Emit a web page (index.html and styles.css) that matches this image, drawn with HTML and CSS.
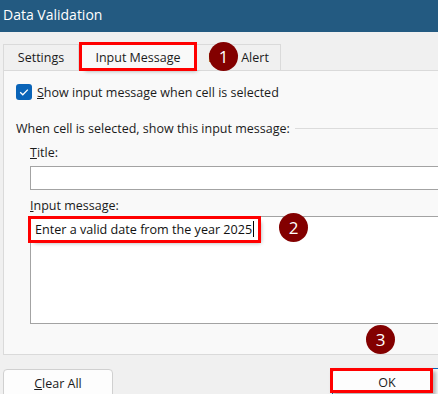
FILE: index.html
```html
<!DOCTYPE html>
<html lang="en">

<head>
    <meta charset="UTF-8">
    <meta name="viewport" content="width=device-width, initial-scale=1.0">
    <title>Data Validation</title>

    <link rel="stylesheet" href="styles.css">
</head>

<body>
    <div class="window">
        <div class="titlebar">Data Validation</div>

        <div class="tabs">
            <div class="tab tabSettings">Settings</div>
            <div class="tab tabAtivo">Input Message</div>
            <div class="tab tabAlert">Error Alert</div>
        </div>

        <div class="panel">
            <label class="checkRow">
                <span class="checkbox">
                    <svg width="16" height="16" viewBox="0 0 16 16">
                        <path d="M4.2 8.3 L6.8 10.8 L11.8 5.6" fill="none" stroke="white" stroke-width="1.3" />
                    </svg>
                </span>
                <span><u>S</u>how input message when cell is selected</span>
            </label>

            <div class="groupTitle"><span>When cell is selected, show this input message:</span></div>

            <div class="fieldLabel"><u>T</u>itle:</div>
            <div class="textBox"></div>

            <div class="fieldLabel"><u>I</u>nput message:</div>
            <div class="textArea">
                <span class="message">Enter a valid date from the year 2025<span class="caret"></span></span>
            </div>
        </div>

        <div class="buttons">
            <div class="btn"><u>C</u>lear All</div>
            <div class="btn btnOk">OK</div>
        </div>

        <div class="okMark"></div>

        <span class="badge badge1">1</span>
        <span class="badge badge2">2</span>
        <span class="badge badge3">3</span>
    </div>
</body>

</html>
```

FILE: styles.css
```css
* {
    margin: 0;
    padding: 0;
    box-sizing: border-box;
}

html,
body {
    overflow: hidden;
    background-color: #f0f0f0;
}

.window {
    position: relative;
    width: 438px;
    height: 394px;
    overflow: hidden;
    font-family: "Open Sans", "Noto Sans", Arial, sans-serif;
    font-size: 12.5px;
    color: #1b1b1b;
    background-color: #f0f0f0;
}

.titlebar {
    height: 32px;
    line-height: 29px;
    padding-left: 3px;
    background-color: #235a81;
    color: white;
    font-size: 14px;
}

/* abas */
.tabs {
    display: flex;
    align-items: flex-end;
    height: 26px;
    margin-top: 12px;
    padding-left: 3px;
}

.tab {
    height: 26px;
    line-height: 26px;
    border: 1px solid #dadada;
    border-bottom: none;
    text-align: center;
    background-color: #f0f0f0;
}

.tabSettings {
    width: 76px;
}

.tabAtivo {
    width: 112px;
    height: 23px;
    line-height: 25px;
    margin: 0 3px 2px 3px;
    border: none;
    background-color: #f9f9f9;
    outline: 3px solid #ff0000;
    box-shadow: 3px 3px 4px rgba(0, 0, 0, 0.35);
}

.tabAlert {
    width: 84px;
    border-left: none;
}

/* painel */
.panel {
    width: 470px;
    margin-left: 3px;
    padding: 13px 0 30px 12px;
    background-color: #f9f9f9;
    border: 1px solid #dadada;
}

.checkRow {
    display: flex;
    align-items: center;
    gap: 5px;
    height: 16px;
}

.checkbox {
    width: 16px;
    height: 16px;
    border-radius: 3px;
    background-color: #0a64b8;
}

.checkbox svg {
    display: block;
}

.groupTitle {
    display: flex;
    align-items: center;
    height: 18px;
    margin-top: 19px;
}

.groupTitle::after {
    content: "";
    flex: 1;
    margin-left: 5px;
    border-top: 1px solid #dcdcdc;
}

.fieldLabel {
    height: 18px;
    line-height: 18px;
    margin-top: 7px;
    margin-left: 14px;
}

.textBox {
    width: 430px;
    height: 24px;
    margin-top: 4px;
    margin-left: 14px;
    background-color: white;
    border: 1px solid #a3a3a3;
}

.fieldLabel+.textArea {
    margin-top: 1px;
}

.textArea {
    width: 430px;
    height: 108px;
    margin-left: 14px;
    padding-top: 2px;
    background-color: white;
    border: 1px solid #a3a3a3;
}

.message {
    display: inline-block;
    height: 21px;
    line-height: 21px;
    padding: 0 4px;
    font-size: 12.6px;
    color: #111;
    outline: 3px solid #ff0000;
    box-shadow: 3px 3px 4px rgba(0, 0, 0, 0.35);
}

.caret {
    display: inline-block;
    width: 1px;
    height: 16px;
    margin-left: 1px;
    vertical-align: -3px;
    background-color: #000;
}

/* botoes */
.buttons {
    display: flex;
    gap: 219px;
    margin-top: 14px;
    padding-left: 3px;
}

.btn {
    flex: none;
    width: 110px;
    height: 30px;
    line-height: 28px;
    text-align: center;
    background-color: #fdfdfd;
    border: 1px solid #d0d0d0;
    border-radius: 4px;
}

.btnOk {
    margin-top: -1px;
    border-color: #0a64b8;
}

.okMark {
    position: absolute;
    left: 330px;
    top: 368px;
    width: 103px;
    height: 25px;
    border: 3px solid #ff0000;
    box-shadow: 3px 3px 4px rgba(0, 0, 0, 0.3);
}

.badge {
    position: absolute;
    width: 29px;
    height: 29px;
    line-height: 29px;
    border-radius: 50%;
    background-color: #830000;
    color: white;
    text-align: center;
    font-size: 17px;
}

.badge1 {
    left: 209px;
    top: 42px;
}

.badge2 {
    left: 279px;
    top: 213px;
}

.badge3 {
    left: 366px;
    top: 325px;
}
```
